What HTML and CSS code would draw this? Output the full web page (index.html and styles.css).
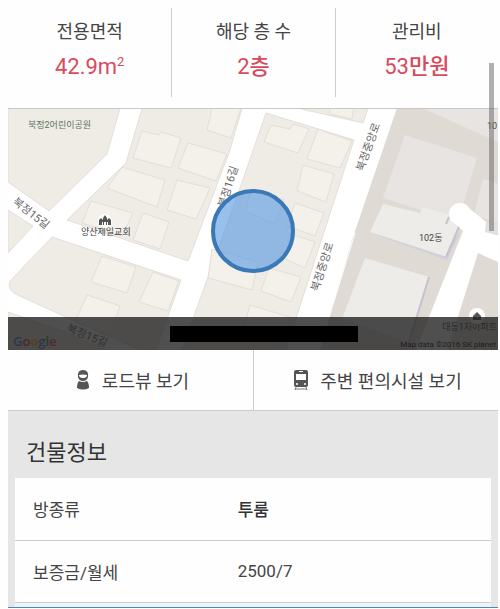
FILE: index.html
```html
<!DOCTYPE html>
<html lang="ko">
<head>
  <meta charset="UTF-8" />
  <meta name="viewport" content="width=device-width, initial-scale=1.0" />
  <title>건물정보</title>
  <link rel="stylesheet" href="styles.css">
</head>
<body>
  <div class="page">
    <dl class="summary">
      <div class="summary-item">
        <dt>전용면적</dt>
        <dd>42.9m<sup>2</sup></dd>
      </div>
      <div class="summary-item">
        <dt>해당 층 수</dt>
        <dd>2<b>층</b></dd>
      </div>
      <div class="summary-item">
        <dt>관리비</dt>
        <dd>53<b>만원</b></dd>
      </div>
    </dl>

    <div class="map">
      <svg class="map-canvas" viewBox="8 109 490 241" preserveAspectRatio="xMidYMid slice">
        <!-- blocks -->
        <g class="block">
          <path d="M8 105H121L107 154L49 211L8 182Z" />
          <path d="M143 105H243L229 153L188 261L67 220L126 163Z" />
          <path d="M8 210L33 226L8 253Z" />
          <path d="M52 237L181 280L154 355L105 335L20 296Q6 291 10 281Z" />
          <path d="M8 312L60 330L118 355H8Z" />
          <path d="M266 113L354 140L284 355H180L240 188Z" />
          <path d="M284 105H369L363 123Z" />
        </g>
        <g class="block-dark">
          <path d="M398 105H500V355H318L352 240Z" />
        </g>

        <!-- buildings -->
        <g class="building">
          <path d="M142 131L159 135L161 132L181 138L171 168L133 158Z" />
          <path d="M122 167L165 180L157 207L107 188Z" />
          <path d="M91 201L133 213L122 236L82 223Z" />
          <path d="M188 143L227 154L216 181L178 168Z" />
          <path d="M177 180L210 188L196 219L167 210Z" />
          <path d="M213 105H242L231 138L207 130Z" />
          <path d="M143 213L169 222L160 249L133 240Z" />
          <path d="M102 256L136 267L127 293L91 282Z" />
          <path d="M87 295L120 306L110 335L75 322Z" />
          <path d="M153 272L179 281L168 311L139 302Z" />
          <path d="M271 125L290 129L293 124L309 129L298 153L264 142Z" />
          <path d="M318 129L352 141L340 168L307 159Z" />
          <path d="M303 165L334 174L326 202L297 191Z" />
          <path d="M251 190L284 200L275 224L245 211Z" />
          <path d="M295 203L324 213L315 236L287 226Z" />
          <path d="M294 235L315 242L305 268L283 258Z" />
          <path d="M212 249L258 262L252 290L208 278Z" />
          <path d="M269 268L301 277L291 302L261 291Z" />
          <path d="M250 305L290 317L279 345L243 331Z" />
          <path d="M330 105H354L352 119L330 114Z" />
        </g>
        <g class="building-dark">
          <path d="M416 105H500V143Z" />
          <path d="M405 135L477 158L462 208L449 219L383 198Z" />
          <path d="M483 179L500 184V224L474 215Z" />
        </g>
        <path class="shade" d="M371 233L447 260L462 229L447 250Z" />
        <g class="building-light">
          <path d="M383 204L420 213L422 207L461 218L447 257L370 232Z" />
          <path d="M365 258L429 277L409 342L342 319Z" />
        </g>
        <path class="edge" d="M429 277L409 342M459 227L446 257M449 217L446 224" />

        <!-- roads of the apartment complex -->
        <path class="road" d="M458 210L500 252V263L478 253L446 355H414L463 231L451 219Z" />
        <circle class="road" cx="460" cy="214" r="11" />
        <path class="road" d="M465 205L500 233V256L450 220Z" />
        <path class="lot" d="M486 222H500V236L485 232Z" />
        <path class="lane" d="M355 233L319 350" />

        <!-- place names -->
        <g class="place">
          <text class="park" x="28" y="128">북정2어린이공원</text>
          <text x="81" y="235">양산제일교회</text>
          <text x="419" y="241">102동</text>
          <text class="end" x="497" y="129">10</text>
          <text class="end" x="497" y="330">대동1차아파트</text>
        </g>
        <g class="street">
          <text transform="translate(12 203) rotate(38)">북정15길</text>
          <text transform="translate(66 331) rotate(22)">북정15길</text>
          <text transform="translate(225 208) rotate(-72)">북정16길</text>
          <text transform="translate(363 172) rotate(-70)">북정중앙로</text>
          <text transform="translate(318 292) rotate(-72)">북정중앙로</text>
        </g>

        <!-- church and apartment markers -->
        <circle class="road" cx="105" cy="221" r="7" />
        <path class="marker" d="M99 225V220L101 218L103 220V218L105 215L107 218V220L109 218L111 220V225H108V222H107V225H106V222H104V225H103V222H102V225Z" />
        <circle class="road" cx="477" cy="316" r="8" />
        <path class="marker" d="M473 316L477 312L481 316V320H473Z" />

        <circle class="area" cx="253" cy="231" r="40" />

        <text class="google" x="13" y="346"><tspan fill="#4285f4">G</tspan><tspan fill="#ea4335">o</tspan><tspan fill="#fbbc05">o</tspan><tspan fill="#4285f4">g</tspan><tspan fill="#34a853">l</tspan><tspan fill="#ea4335">e</tspan></text>
        <text class="credit" x="496" y="347">Map data ©2016 SK planet</text>
      </svg>
      <div class="map-bar"><span class="map-address"></span></div>
    </div>

    <div class="actions">
      <button type="button">
        <svg width="14" height="20" viewBox="0 0 14 20">
          <path d="M2 7Q1 0 7 0Q13 0 12 7Q11 11 7 11Q3 11 2 7Z" fill="#555" />
          <path d="M3 5Q7 4 11 5Q11 8 7 8Q3 8 3 5Z" fill="#fff" />
          <path d="M3 11Q7 13 11 11Q13 13 13 18Q7 21 1 18Q1 13 3 11Z" fill="#555" />
        </svg>
        로드뷰 보기
      </button>
      <button type="button">
        <svg width="14" height="20" viewBox="0 0 14 20">
          <path d="M2 0H12Q14 0 14 2V15Q14 17 12 17H2Q0 17 0 15V2Q0 0 2 0Z" fill="#555" />
          <path d="M2 4H12V10H2ZM5 1H9V2H5Z" fill="#fff" />
          <circle cx="3" cy="14" r="1" fill="#fff" />
          <circle cx="11" cy="14" r="1" fill="#fff" />
          <path d="M2 17L1 20M12 17L13 20M1 19H13" stroke="#777" fill="none" />
        </svg>
        주변 편의시설 보기
      </button>
    </div>

    <section class="info">
      <h2>건물정보</h2>
      <table>
        <tr>
          <th scope="row">방종류</th>
          <td class="strong">투룸</td>
        </tr>
        <tr>
          <th scope="row">보증금/월세</th>
          <td>2500/7</td>
        </tr>
      </table>
      <div class="bottom-gap"></div>
    </section>
    <div class="bottom-line"></div>
    <div class="scroll-thumb"></div>
  </div>
</body>
</html>
```
FILE: styles.css
```css
* {
  box-sizing: border-box;
}
body {
  margin: 0;
  background: #fefefe;
  color: #444;
  font-family: Roboto, "Noto Sans CJK KR", sans-serif;
  font-size: 18px;
}
.page {
  position: relative;
  padding: 8px 2px 0 8px;
}
.summary {
  display: grid;
  grid-template-columns: repeat(3, 1fr);
  margin: 0 0 11px;
  text-align: center;
}
.summary-item {
  padding: 9px 0 14px;
}
.summary-item + .summary-item {
  border-left: 1px solid #ccc;
}
.summary dt {
  line-height: 30px;
}
.summary dd {
  margin: 4px 0 0;
  color: #d94a5c;
  font-size: 22px;
  line-height: 32px;
}
.summary b {
  font-weight: 500;
}
.summary sup {
  font-size: 13px;
  line-height: 0;
}

/* map */
.map {
  position: relative;
  border-top: 1px solid #c8c8c8;
}
.map-canvas {
  display: block;
  width: 100%;
  height: 241px;
  background: #fff;
}
.block {
  fill: #efebe5;
  stroke: #e3dfd9;
}
.block-dark {
  fill: #e0dad5;
}
.building {
  fill: #f4f0ea;
  stroke: #e2ded8;
}
.building-dark {
  fill: #e8e4e1;
}
.building-light {
  fill: #edece8;
}
.shade {
  fill: #cfd0da;
}
.edge {
  fill: none;
  stroke: #c2c3ce;
  stroke-width: 2;
}
.road {
  fill: #fff;
}
.lot {
  fill: #e2e0de;
}
.lane {
  stroke: #fff;
}
.place {
  fill: #444;
  font-size: 9px;
}
.park {
  fill: #5e7363;
}
.end {
  text-anchor: end;
}
.street {
  fill: #666;
  font-size: 11px;
}
.marker {
  fill: #555;
}
.area {
  fill: rgba(82, 150, 224, 0.6);
  stroke: #3a78b7;
  stroke-width: 4;
}
.google {
  font-family: "Open Sans", sans-serif;
  font-size: 13px;
  font-weight: 600;
}
.credit {
  fill: #000;
  font-size: 8px;
  text-anchor: end;
}
.map-bar {
  position: absolute;
  right: 0;
  bottom: 0;
  left: 0;
  display: flex;
  align-items: center;
  justify-content: center;
  height: 33px;
  padding-left: 22px;
  background: rgba(35, 35, 35, 0.8);
}
.map-address {
  width: 188px;
  height: 16px;
  background: #000;
}

.actions {
  display: grid;
  grid-template-columns: 1fr 1fr;
  border-bottom: 1px solid #ccc;
}
.actions button {
  display: flex;
  align-items: center;
  justify-content: center;
  gap: 12px;
  height: 60px;
  padding: 0 0 0 4px;
  border: 0;
  background: #fefefe;
  color: #444;
  font: inherit;
  cursor: pointer;
}
.actions button + button {
  border-left: 1px solid #ccc;
}

/* building info */
.info {
  padding: 25px 7px 0;
  background: #e6e6e6;
}
.info h2 {
  margin: 0 0 8px;
  padding-left: 11px;
  color: #333;
  font-size: 22px;
  font-weight: 400;
  line-height: 34px;
}
.info table {
  width: 100%;
  border-collapse: collapse;
  background: #fefefe;
  font-size: 17px;
  table-layout: fixed;
}
.info tr {
  height: 62px;
  border-bottom: 1px solid #ccc;
}
.info th,
.info td {
  padding: 0 0 0 18px;
  font-weight: 400;
  text-align: left;
}
.info th {
  width: 43%;
}
.info .strong {
  color: #333;
  font-weight: 500;
}
.bottom-gap {
  height: 4px;
  background: #eef6fc;
}
.bottom-line {
  height: 1px;
  background: #4c87b8;
}
.scroll-thumb {
  position: absolute;
  top: 63px;
  right: 6px;
  width: 5px;
  height: 168px;
  background: rgba(110, 110, 110, 0.55);
}
```
